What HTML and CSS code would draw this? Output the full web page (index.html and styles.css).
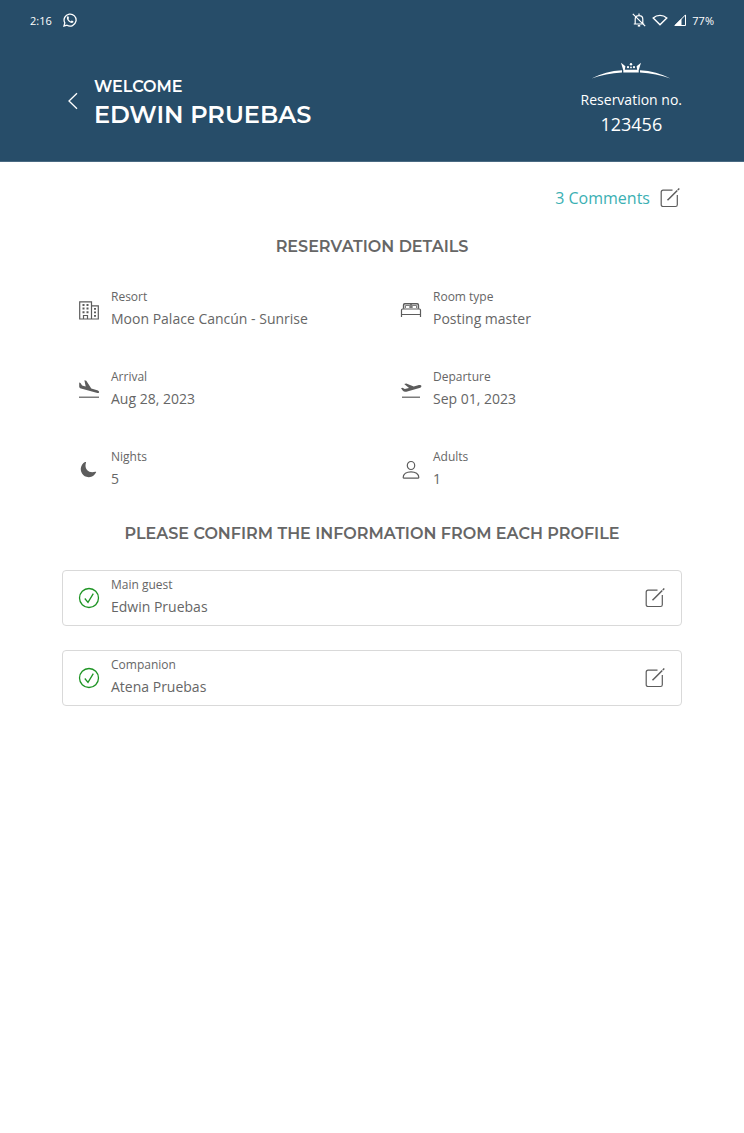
FILE: index.html
```html
<!DOCTYPE html>
<html lang="en">
<head>
<meta charset="utf-8">
<meta name="viewport" content="width=device-width, initial-scale=1">
<title>Reservation details</title>
<link rel="stylesheet" href="styles.css">
</head>
<body>
<svg class="sprite" aria-hidden="true">
  <symbol id="edit" viewBox="0 0 20 20"><path d="M12.500 2.200H3a1.800 1.800 0 0 0-1.800 1.800v12.700A1.800 1.800 0 0 0 3 18.500h12.500a1.800 1.800 0 0 0 1.800-1.800V7" fill="none" stroke="currentColor" stroke-width="1.200"/><path d="M7.500 12.300 17.300 2.500" fill="none" stroke="currentColor" stroke-width="1.500"/><path d="m17.800 2 1.500-1.500" fill="none" stroke="currentColor" stroke-width="1.500"/></symbol>
  <symbol id="check" viewBox="0 0 22 22"><circle cx="11" cy="11" r="9.500" fill="none" stroke="currentColor" stroke-width="1.300"/><path d="m6.800 11.500 3.200 3.800 5.300-8.600" fill="none" stroke="currentColor" stroke-width="1.300"/></symbol>
</svg>
<header class="header">
  <div class="status">
    <div class="status-group status-left">
      <span>2:16</span>
      <svg width="14" height="14" viewBox="0 0 14 14"><path d="M1 13l.8-3.100A6 6 0 1 1 4 12.200z" fill="none" stroke="currentColor" stroke-width="1.300"/><path d="M4.300 3.600c.5-.4 1-.3 1.200.2l.5 1.200c.1.300-.5.800-.6 1 .5 1.100 1.300 1.900 2.500 2.400.4-.3.700-.9 1-.8l1.300.6c.4.200.3 1-.1 1.400-1.100 1-3 .3-4.400-1C4.200 7.200 3.200 4.900 4.300 3.600z" fill="currentColor"/></svg>
    </div>
    <div class="status-group">
      <svg width="14" height="14" viewBox="0 0 14 14" fill="none" stroke="currentColor" stroke-width="1.200"><path d="M1.800 11h10.400M3.200 11V6.200C3.200 4 4.700 2.600 7 2.600s3.800 1.400 3.800 3.600V11M7 2.600V.6M.8.8l12.400 12.400"/><path d="M5.800 12.800h2.400" stroke-width="1.600"/></svg>
      <svg width="16" height="12" viewBox="0 0 16 12" fill="none" stroke="currentColor" stroke-width="1.400"><path d="M1.200 4C5 .5 11 .5 14.800 4L8 10.800z"/></svg>
      <svg width="12" height="12" viewBox="0 0 12 12"><path d="M11.500.9v10.600H.9z" fill="none" stroke="currentColor"/><path d="M.5 11.500 7.500 4.500v7z" fill="currentColor"/></svg>
      <span>77%</span>
    </div>
  </div>
  <div class="hero">
    <button class="icon-button back" type="button" aria-label="Back"><svg width="12" height="18" viewBox="0 0 12 18"><path d="M10 1.200 2 9l8 7.800" fill="none" stroke="currentColor" stroke-width="1.300"/></svg></button>
    <h1 class="guest"><span class="welcome">WELCOME</span><span class="name">EDWIN PRUEBAS</span></h1>
    <div class="reservation">
      <svg class="crown" width="80" height="18" viewBox="0 0 80 18" fill="currentColor"><path d="M.5 16.500C10 11.500 20 8.800 31 8.300v2.200C20 11 10 13.200.5 16.500zM79.500 16.500C70 11.500 60 8.800 49 8.300v2.200C60 11 70 13.200 79.500 16.500z"/><path d="M30 .8l4.400 3.400-.6 3.600h12.400l-.6-3.600L50 .8l-2.300 7.400v2.300H32.300V8.200z"/><circle cx="37" cy="5.200" r="1.100"/><circle cx="43" cy="5.200" r="1.100"/><circle cx="40" cy="2.300" r="1.200"/><circle cx="40" cy="5.400" r=".9"/></svg>
      <span class="res-label">Reservation no.</span>
      <span class="res-number">123456</span>
    </div>
  </div>
</header>
<main class="main">
  <div class="comments"><a class="comments-link" href="#comments">3 Comments</a><button class="icon-button" type="button" aria-label="Edit comments"><svg width="20" height="20"><use href="#edit"/></svg></button></div>
  <h2 class="title">RESERVATION DETAILS</h2>
  <dl class="details">
    <div class="detail">
      <svg class="icon" width="22" height="22" viewBox="0 0 22 22"><path d="M1.700 20V2.800h11.800V20zM13.500 6.800h6.800V20h-6.800M5.500 19.800v-3.300h4v3.300" fill="none" stroke="currentColor" stroke-width="1.200"/><path d="M4.500 5h2v2h-2zm4 0h2v2h-2zm-4 3.600h2v2h-2zm4 0h2v2h-2zm-4 3.600h2v2h-2zm4 0h2v2h-2zM16 9h2v1.800h-2zm0 3.500h2v1.800h-2zm0 3.500h2v1.800h-2z" fill="currentColor"/></svg>
      <div><dt>Resort</dt><dd>Moon Palace Cancún - Sunrise</dd></div>
    </div>
    <div class="detail">
      <svg class="icon" width="22" height="22" viewBox="0 0 22 22" fill="none" stroke="currentColor"><path d="M3.600 9.800V6c0-.7.400-1.200 1.100-1.200h12.600c.7 0 1.100.5 1.100 1.200v3.800M11 5v4" stroke-width="1.500"/><path d="M5.500 9V6.500h4.300V9M12.200 9V6.500h4.300V9" stroke-width=".8"/><path d="M1.500 18v-7c0-.7.400-1 1-1h17c.6 0 1 .3 1 1v7M1.500 15.500h19" stroke-width="1.200"/></svg>
      <div><dt>Room type</dt><dd>Posting master</dd></div>
    </div>
    <div class="detail">
      <svg class="icon" width="22" height="22" viewBox="0 0 22 22" fill="currentColor"><path d="M1.200 3.500 2.500 3.900l1.600 2.700 3.600 1L6.400 1.200l1.900.5 5 7.900 5.900 1.600c2.600.8 2.600 3.100.2 2.700L3 9.500c-1.200-.4-1.700-1-1.800-2z"/><path d="M1 17.600h20v1.200H1z"/></svg>
      <div><dt>Arrival</dt><dd>Aug 28, 2023</dd></div>
    </div>
    <div class="detail">
      <svg class="icon" width="22" height="22" viewBox="0 0 22 22" fill="currentColor"><path d="M1 9.200l1.500-.4 2.300 1.300L9 8.900 4.200 5l2.100-.6 7.400 3.100 4.400-1.300c1.500-.4 3.100-.1 3.300.7.200.8-.8 1.600-2 2L6.400 12.700c-1.500.4-2.700.1-3.500-.9z"/><path d="M2 17.600h18v1.200H2z"/></svg>
      <div><dt>Departure</dt><dd>Sep 01, 2023</dd></div>
    </div>
    <div class="detail">
      <svg class="icon" width="22" height="22" viewBox="0 0 22 22"><path d="M8 3.500c-2 6.300 2.300 11.200 9.300 9.200.7-.2 1.100.2.700.9A8 8 0 1 1 7 3.100c.7-.4 1.200-.2 1 .4z" fill="currentColor"/></svg>
      <div><dt>Nights</dt><dd>5</dd></div>
    </div>
    <div class="detail">
      <svg class="icon" width="22" height="22" viewBox="0 0 22 22" fill="none" stroke="currentColor" stroke-width="1.200"><ellipse cx="11" cy="6.500" rx="3.700" ry="4"/><path d="M3.200 18.600c0-3.600 3.400-5.800 7.800-5.800s7.800 2.200 7.800 5.800c0 .3-.2.500-.5.500H3.700c-.3 0-.5-.2-.5-.5z"/></svg>
      <div><dt>Adults</dt><dd>1</dd></div>
    </div>
  </dl>
  <h2 class="title">PLEASE CONFIRM THE INFORMATION FROM EACH PROFILE</h2>
  <ul class="profiles">
    <li class="profile">
      <svg class="icon check" width="22" height="22"><use href="#check"/></svg>
      <div class="profile-text"><span class="label">Main guest</span><span class="value">Edwin Pruebas</span></div>
      <button class="icon-button" type="button" aria-label="Edit Edwin Pruebas"><svg width="20" height="20"><use href="#edit"/></svg></button>
    </li>
    <li class="profile">
      <svg class="icon check" width="22" height="22"><use href="#check"/></svg>
      <div class="profile-text"><span class="label">Companion</span><span class="value">Atena Pruebas</span></div>
      <button class="icon-button" type="button" aria-label="Edit Atena Pruebas"><svg width="20" height="20"><use href="#edit"/></svg></button>
    </li>
  </ul>
</main>
</body>
</html>
```
FILE: styles.css
```css
* { box-sizing: border-box; }
body { margin: 0; background: #fff; color: #666; font-family: "Open Sans", "Noto Sans", sans-serif; font-size: 14px; }
h1, h2, dl, dd, ul { margin: 0; padding: 0; }
svg { display: block; flex: none; }
.sprite { position: absolute; width: 0; height: 0; }
.icon-button { display: flex; padding: 0; border: 0; background: none; color: #5c5c5c; cursor: pointer; }
.icon { color: #5c5c5c; }

.header { background: #274d69; color: #fff; border-bottom: 1px solid #496a82; }
.status { display: flex; justify-content: space-between; align-items: center; height: 40px; padding: 0 30px; font-size: 11px; }
.status-group { display: flex; align-items: center; gap: 6px; }
.status-left { gap: 11px; }
.hero { display: flex; align-items: center; height: 121px; padding: 0 62px; }
.back { color: #fff; padding: 0 15px 0 5px; }
.guest { flex: 1; display: flex; flex-direction: column; padding-top: 4px; font-family: Montserrat, Inter, sans-serif; font-weight: 600; }
.welcome { font-size: 16px; line-height: 24px; }
.name { font-size: 24px; line-height: 32px; }
.reservation { display: flex; flex-direction: column; align-items: center; padding-bottom: 4px; }
.crown { margin-bottom: 8px; }
.res-label { font-size: 14px; line-height: 24px; }
.res-number { font-size: 18px; line-height: 24px; }

.main { padding: 24px 62px; }
.comments { display: flex; justify-content: flex-end; align-items: center; gap: 10px; height: 24px; padding-right: 2px; }
.comments-link { color: #3bb0b3; font-size: 16px; text-decoration: none; }
.title { padding-top: 1px; font-family: Montserrat, Inter, sans-serif; font-size: 16px; line-height: 24px; font-weight: 600; text-align: center; }
.comments + .title { margin-top: 24px; }
.details { display: grid; grid-template-columns: 1fr 1fr; gap: 24px; padding: 23px 0; }
.detail, .profile { display: flex; align-items: center; height: 56px; padding: 0 16px; gap: 11px; }
dt, .label { display: block; font-size: 12px; line-height: 22px; }
dd, .value { display: block; font-size: 14px; line-height: 22px; }
.detail > div, .profile-text { padding-bottom: 4px; }
.profiles { display: grid; gap: 24px; margin-top: 24px; list-style: none; }
.profile { border: 1px solid #d9d9d9; border-radius: 4px; padding: 0 16px 0 15px; }
.profile-text { flex: 1; }
.check { color: #1e9424; }
```
